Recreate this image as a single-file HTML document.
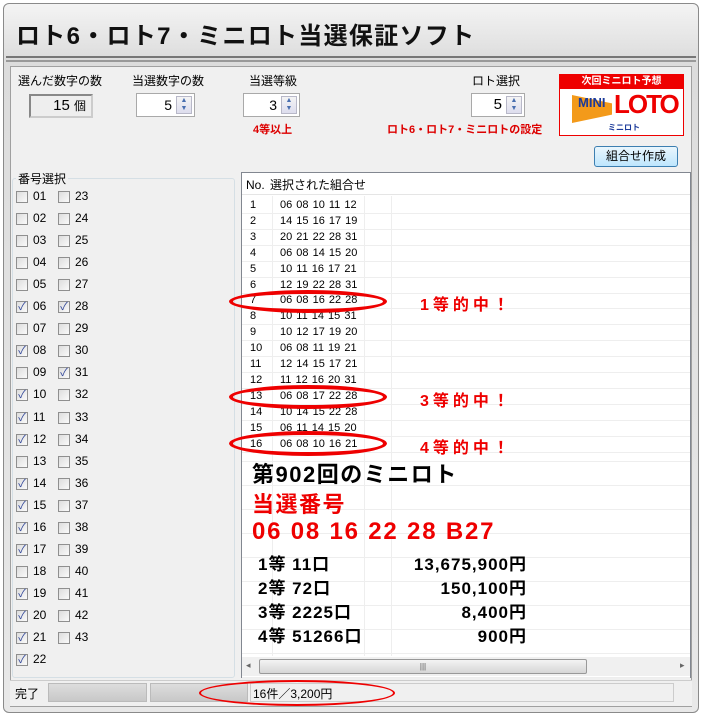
<!DOCTYPE html>
<html><head><meta charset="utf-8"><style>
*{margin:0;padding:0;box-sizing:border-box}
body{width:702px;height:715px;background:#fff;position:relative;overflow:hidden;font-family:"Liberation Sans","Noto Sans CJK JP",sans-serif;font-size:12px;color:#000}
.a{position:absolute}
.win{left:3px;top:3px;width:696px;height:710px;border:1px solid #8a8a8a;border-radius:6px;background:linear-gradient(#f4f4f4,#dcdcdc 8%,#e8e8e8)}
.title{left:16px;top:16px;font-size:24px;font-weight:bold;letter-spacing:1.3px;color:#111}
.main{left:10px;top:66px;width:682px;height:641px;background:#f0f0f0;border:1px solid #a0a0a0}
.lbl{font-size:12px}
.box{background:#fff;border:1px solid #a9a9a9;height:24px;text-align:right;font-size:14px;line-height:22px;padding-right:22px}
.sp{position:absolute;right:2px;top:2px;width:16px;height:18px;background:linear-gradient(#f4f4f4,#dde);border:1px solid #b8b8c8;font-size:7px;color:#4a6fb0;line-height:8px;text-align:center}
.red{color:#d00;font-weight:bold;font-size:11px}
.cb{width:12px;height:12px;border:1px solid #8f8f8f;background:linear-gradient(135deg,#ddd,#fafafa);font-size:11px;line-height:10px;color:#33489a;text-align:center}
.n{font-size:12px}
.row{font-size:11px;height:16px;line-height:16px}
.el{border:4px solid #e00;border-radius:50%}
.hit{color:#e00;font-weight:bold;font-size:16px;letter-spacing:4px}
.big{font-weight:bold}
.pl{font-weight:bold;font-size:17px;letter-spacing:1px;left:258px}
.pr{font-weight:bold;font-size:17px;letter-spacing:1px;right:175px;text-align:right}
</style></head><body>
<div class="a win"></div>
<div class="a title">ロト6・ロト7・ミニロト当選保証ソフト</div>
<div class="a" style="left:6px;top:56px;width:690px;height:2px;background:#777"></div>
<div class="a" style="left:6px;top:60px;width:690px;height:2px;background:#999"></div>
<div class="a main"></div>
<div class="a lbl" style="left:18px;top:72px">選んだ数字の数</div>
<div class="a lbl" style="left:132px;top:72px">当選数字の数</div>
<div class="a lbl" style="left:249px;top:72px">当選等級</div>
<div class="a lbl" style="left:472px;top:72px">ロト選択</div>
<div class="a" style="left:29px;top:94px;width:64px;height:24px;border:2px solid #888;border-right-color:#ccc;border-bottom-color:#ccc;background:#eee;font-size:15px;text-align:right;padding-right:5px;line-height:20px">15 <span style="font-size:12px">個</span></div>
<div class="a box" style="left:136px;top:93px;width:59px">5<div class="sp">▲<br>▼</div></div>
<div class="a box" style="left:243px;top:93px;width:57px">3<div class="sp">▲<br>▼</div></div>
<div class="a box" style="left:471px;top:93px;width:54px;font-size:15px">5<div class="sp">▲<br>▼</div></div>
<div class="a red" style="left:253px;top:121px">4等以上</div>
<div class="a red" style="left:387px;top:121px">ロト6・ロト7・ミニロトの設定</div>
<div class="a" style="left:559px;top:74px;width:125px;height:62px;border:1px solid #e00;background:#fff">
<div style="background:#e00;color:#fff;font-size:10px;font-weight:bold;text-align:center;height:14px;line-height:14px">次回ミニロト予想</div>
<div style="position:absolute;left:12px;top:20px;width:40px;height:28px;background:#f39a1a;clip-path:polygon(0 0,100% 30%,100% 70%,0 100%)"></div>
<div style="position:absolute;left:18px;top:20px;font-size:13px;font-weight:bold;color:#1b3a9a">MINI</div>
<div style="position:absolute;left:54px;top:14px;font-size:26px;font-weight:bold;color:#e00;letter-spacing:-2px">LOTO</div>
<div style="position:absolute;left:48px;top:47px;font-size:8px;font-weight:bold;color:#1b3a9a">ミニロト</div>
</div>
<div class="a" style="left:594px;top:146px;width:84px;height:21px;border:1px solid #3c7fb1;border-radius:3px;background:linear-gradient(#eaf6fd,#bee6fd);text-align:center;line-height:19px">組合せ作成</div>
<div class="a" style="left:12px;top:178px;width:223px;height:500px;border:1px solid #d5dfe5;border-radius:3px"></div>
<div class="a" style="left:16px;top:170px;background:#f0f0f0;padding:0 2px">番号選択</div>
<div id="cbs"></div>
<div class="a" style="left:241px;top:172px;width:450px;height:506px;background:#fff;border:1px solid #828790"></div>
<div class="a" style="left:242px;top:173px;width:448px;height:22px;background:#fff;border-bottom:1px solid #e5e5e5"></div>
<div class="a" style="left:246px;top:178px">No.</div>
<div class="a" style="left:270px;top:176px">選択された組合せ</div>
<div class="a" style="left:272px;top:196px;width:1px;height:460px;background:#eee"></div>
<div class="a" style="left:364px;top:196px;width:1px;height:460px;background:#eee"></div>
<div class="a" style="left:391px;top:196px;width:1px;height:460px;background:#eee"></div>
<div id="rows"></div>
<div class="a big" style="left:252px;top:457px;font-size:22px;letter-spacing:1.5px">第902回のミニロト</div>
<div class="a big" style="left:252px;top:487px;font-size:22px;letter-spacing:1.5px;color:#e00">当選番号</div>
<div class="a big" style="left:252px;top:518px;font-size:24px;letter-spacing:1.8px;color:#e00">06 08 16 22 28 B27</div>
<div class="a pl" style="top:550px">1等 11口</div><div class="a pr" style="top:550px">13,675,900円</div>
<div class="a pl" style="top:574px">2等 72口</div><div class="a pr" style="top:574px">150,100円</div>
<div class="a pl" style="top:598px">3等 2225口</div><div class="a pr" style="top:598px">8,400円</div>
<div class="a pl" style="top:622px">4等 51266口</div><div class="a pr" style="top:622px">900円</div>
<div class="a el" style="left:229px;top:290px;width:158px;height:23px"></div>
<div class="a el" style="left:229px;top:385px;width:158px;height:24px"></div>
<div class="a el" style="left:229px;top:431px;width:158px;height:25px"></div>
<div class="a hit" style="left:420px;top:291px">1等的中！</div>
<div class="a hit" style="left:420px;top:387px">3等的中！</div>
<div class="a hit" style="left:420px;top:434px">4等的中！</div>
<div class="a" style="left:242px;top:657px;width:448px;height:19px;background:#f0f0f0"></div>
<div class="a" style="left:246px;top:660px;font-size:9px;color:#666">◂</div>
<div class="a" style="left:680px;top:660px;font-size:9px;color:#666">▸</div>
<div class="a" style="left:259px;top:659px;width:328px;height:15px;border:1px solid #999;border-radius:2px;background:linear-gradient(#f3f3f3,#d6d6d6);text-align:center;font-size:8px;line-height:13px;color:#555">|||</div>
<div class="a" style="left:10px;top:680px;width:682px;height:26px;background:#f0f0f0;border-top:1px solid #ccc"></div>
<div class="a" style="left:15px;top:685px">完了</div>
<div class="a" style="left:48px;top:683px;width:99px;height:19px;background:linear-gradient(#ddd,#c8c8c8);border:1px solid #bbb"></div>
<div class="a" style="left:150px;top:683px;width:98px;height:19px;background:linear-gradient(#ddd,#c8c8c8);border:1px solid #bbb"></div>
<div class="a" style="left:250px;top:683px;width:424px;height:19px;border:1px solid #ccc"></div>
<div class="a" style="left:253px;top:685px">16件／3,200円</div>
<div class="a" style="left:199px;top:680px;width:196px;height:26px;border:2px solid #e00;border-radius:50%"></div>
<script>
var c='',ch=[6,8,10,11,12,14,15,16,17,19,20,21,22,28,31];
for(var i=0;i<22;i++){var y=191+i*22.05;
function cb(n,x){var k=ch.indexOf(n)>=0;c+='<div class="a cb" style="left:'+x+'px;top:'+(y)+'px">'+(k?'✓':'')+'</div><div class="a n" style="left:'+(x+17)+'px;top:'+(y-2)+'px">'+(n<10?'0'+n:n)+'</div>';}
cb(i+1,16);if(i<21)cb(i+23,58);}
document.getElementById('cbs').innerHTML=c;
var r=['06 08 10 11 12','14 15 16 17 19','20 21 22 28 31','06 08 14 15 20','10 11 16 17 21','12 19 22 28 31','06 08 16 22 28','10 11 14 15 31','10 12 17 19 20','06 08 11 19 21','12 14 15 17 21','11 12 16 20 31','06 08 17 22 28','10 14 15 22 28','06 11 14 15 20','06 08 10 16 21'],h='';
for(var j=0;j<16;j++){var yy=197+j*15.9;h+='<div class="a row" style="left:250px;top:'+yy+'px">'+(j+1)+'</div><div class="a row" style="left:280px;top:'+yy+'px;word-spacing:1px">'+r[j]+'</div><div class="a" style="left:242px;top:'+(yy+16)+'px;width:448px;height:1px;background:#eee"></div>';}
for(var k=0;k<11;k++)h+='<div class="a" style="left:242px;top:'+(461+k*24)+'px;width:448px;height:1px;background:#eee"></div>';
document.getElementById('rows').innerHTML=h;
</script>
</body></html>
